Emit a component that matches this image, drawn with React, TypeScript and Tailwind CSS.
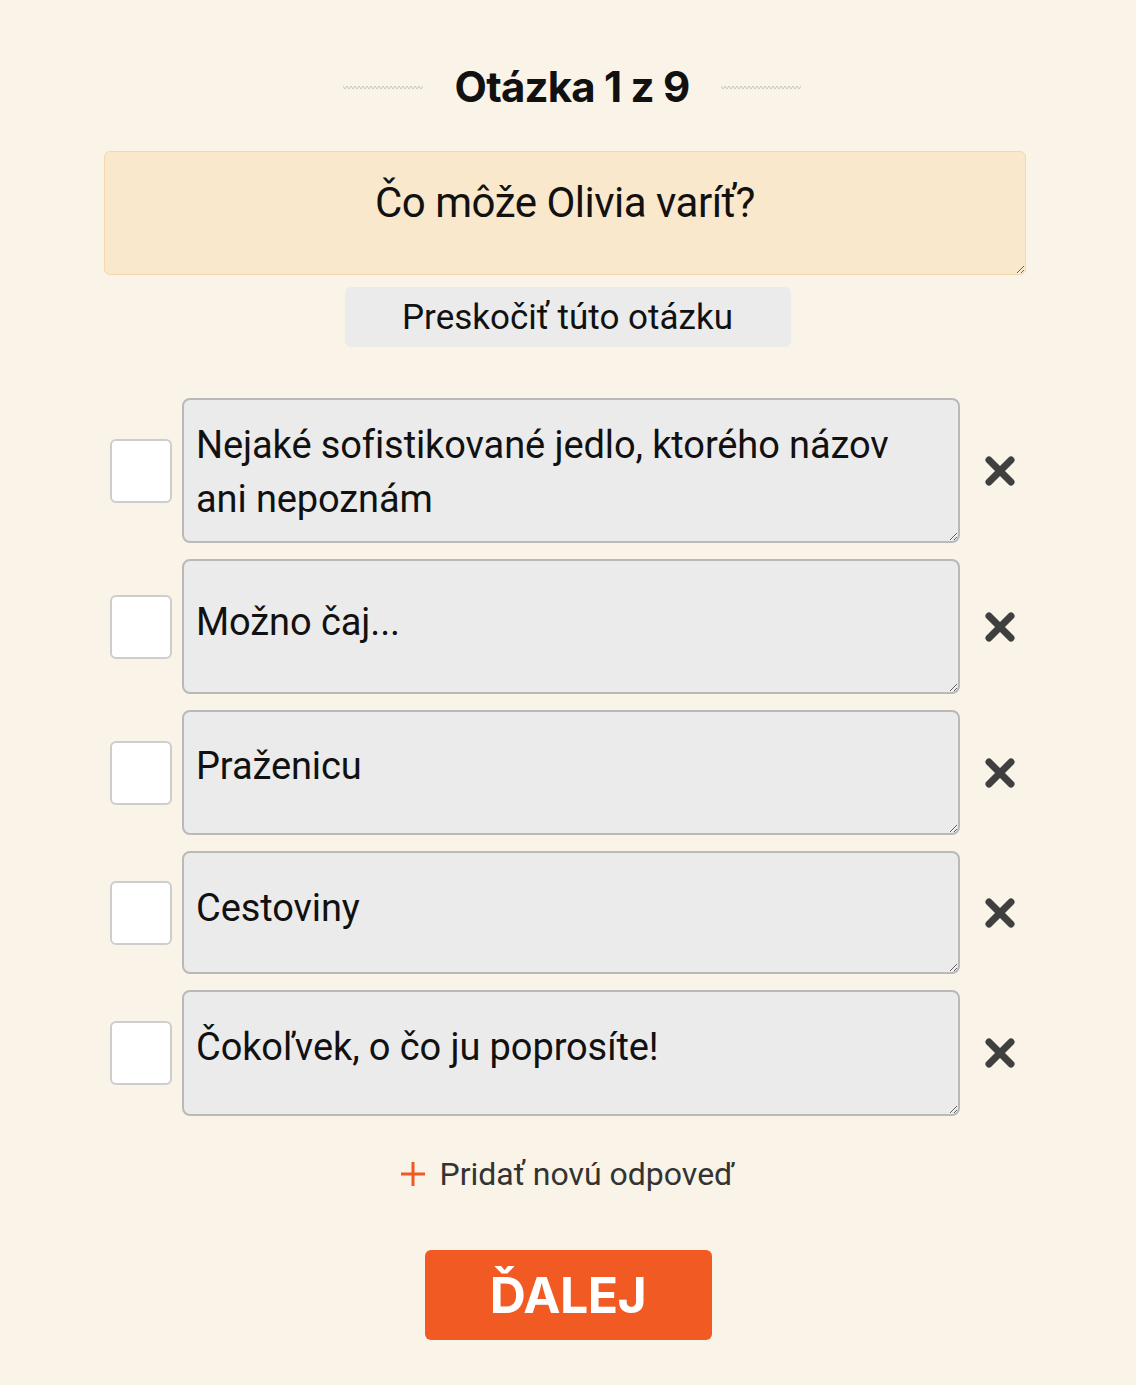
import { useState } from "react";

type Answer = {
  id: number;
  text: string;
  height: string;
  padTop: string;
};

const initialAnswers: Answer[] = [
  { id: 1, text: "Nejaké sofistikované jedlo, ktorého názov ani nepoznám", height: "h-[145px]", padTop: "pt-[18px]" },
  { id: 2, text: "Možno čaj...", height: "h-[135px]", padTop: "pt-[34px]" },
  { id: 3, text: "Praženicu", height: "h-[125px]", padTop: "pt-[27px]" },
  { id: 4, text: "Cestoviny", height: "h-[123px]", padTop: "pt-[28px]" },
  { id: 5, text: "Čokoľvek, o čo ju poprosíte!", height: "h-[126px]", padTop: "pt-[28px]" },
];

function Squiggle() {
  const pts: string[] = [];
  for (let i = 0; i <= 40; i++) {
    pts.push(`${i * 2},${i % 2 === 0 ? 1 : 4}`);
  }
  return (
    <svg width="80" height="5" viewBox="0 0 80 5" className="block">
      <polyline points={pts.join(" ")} fill="none" stroke="#c9c6c1" strokeWidth="1" />
    </svg>
  );
}

function CrossIcon() {
  return (
    <svg width="32" height="32" viewBox="0 0 32 32">
      <path d="M5 5 L27 27 M27 5 L5 27" stroke="#3f3f3f" strokeWidth="7" strokeLinecap="round" />
    </svg>
  );
}

function PlusIcon() {
  return (
    <svg width="26" height="26" viewBox="0 0 26 26">
      <path d="M13 1 V25 M1 13 H25" stroke="#f05a22" strokeWidth="3" />
    </svg>
  );
}

export default function App() {
  const [answers, setAnswers] = useState(initialAnswers);
  const [checked, setChecked] = useState<Record<number, boolean>>({});

  const removeAnswer = (id: number) => {
    setAnswers(answers.filter((a) => a.id !== id));
  };

  return (
    <div className="min-h-[1385px] bg-[#faf3e8] font-['Roboto',sans-serif] text-[#111]">
      <div className="pt-[66px] pl-[8px] flex items-center justify-center">
        <Squiggle />
        <h1 className="mx-[32px] font-['Inter',sans-serif] text-[42px] leading-none font-bold tracking-[-0.8px]">
          Otázka 1 z 9
        </h1>
        <Squiggle />
      </div>

      <textarea
        defaultValue="Čo môže Olivia varíť?"
        className="block mt-[43px] ml-[104px] w-[922px] h-[124px] rounded-[6px] border border-[#f3d7ad] bg-[#fae8cc] pt-[24px] px-4 text-center text-[42px] leading-[54px] tracking-[-0.5px] outline-none resize-y"
      />

      <div className="mt-[12px] flex justify-center">
        <button className="w-[446px] h-[60px] rounded-[6px] bg-[#ebebeb] text-[35px] leading-none text-[#111] ml-[-1px]">
          Preskočiť túto otázku
        </button>
      </div>

      <div className="mt-[51px] ml-[110px] flex flex-col gap-4">
        {answers.map((a) => (
          <div key={a.id} className="flex items-center">
            <button
              onClick={() => setChecked({ ...checked, [a.id]: !checked[a.id] })}
              className="w-[62px] h-[64px] shrink-0 rounded-[6px] border-2 border-[#cdcdcd] bg-white"
            />
            <textarea
              defaultValue={a.text}
              className={`ml-[10px] w-[778px] ${a.height} ${a.padTop} shrink-0 rounded-[8px] border-2 border-[#b9b9b9] bg-[#ebebeb] pl-[12px] pr-[40px] text-[38px] leading-[54px] tracking-[-0.1px] outline-none resize-y`}
            />
            <button onClick={() => removeAnswer(a.id)} className="ml-[24px] w-[32px] h-[32px]">
              <CrossIcon />
            </button>
          </div>
        ))}
      </div>

      <div className="mt-[38px] flex justify-center">
        <button className="flex items-center gap-[14px] text-[32px] leading-[40px] text-[#333] ml-[-2px]">
          <PlusIcon />
          Pridať novú odpoveď
        </button>
      </div>

      <div className="mt-[56px] flex justify-center">
        <button className="w-[287px] h-[90px] rounded-[6px] bg-[#f15a22] text-white font-['Inter',sans-serif] text-[50px] font-bold tracking-[-0.5px]">
          ĎALEJ
        </button>
      </div>
    </div>
  );
}
